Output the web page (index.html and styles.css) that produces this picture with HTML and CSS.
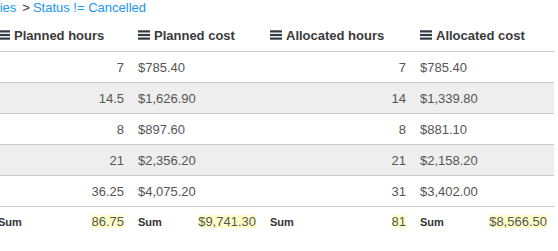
FILE: index.html
```html
<!DOCTYPE html>
<html>
<head>
<meta charset="utf-8">
<link rel="stylesheet" href="styles.css">
</head>
<body>
<div class="page">
  <div class="crumbs"><a class="crumb">Activities</a><span class="sep">&gt;</span><a class="crumb">Status != Cancelled</a></div>
  <table class="grid">
    <colgroup>
      <col class="c1"><col class="c2"><col class="c3"><col class="c4">
    </colgroup>
    <thead>
      <tr>
        <th><svg class="bars" viewBox="0 0 12 10" width="12" height="10"><rect x="0" y="0.3" width="12" height="2.2"/><rect x="0" y="3.9" width="12" height="2.2"/><rect x="0" y="7.5" width="12" height="2.2"/></svg>Planned hours</th>
        <th><svg class="bars" viewBox="0 0 12 10" width="12" height="10"><rect x="0" y="0.3" width="12" height="2.2"/><rect x="0" y="3.9" width="12" height="2.2"/><rect x="0" y="7.5" width="12" height="2.2"/></svg>Planned cost</th>
        <th><svg class="bars" viewBox="0 0 12 10" width="12" height="10"><rect x="0" y="0.3" width="12" height="2.2"/><rect x="0" y="3.9" width="12" height="2.2"/><rect x="0" y="7.5" width="12" height="2.2"/></svg>Allocated hours</th>
        <th><svg class="bars" viewBox="0 0 12 10" width="12" height="10"><rect x="0" y="0.3" width="12" height="2.2"/><rect x="0" y="3.9" width="12" height="2.2"/><rect x="0" y="7.5" width="12" height="2.2"/></svg>Allocated cost</th>
      </tr>
    </thead>
    <tbody>
      <tr><td class="num">7</td><td>$785.40</td><td class="num">7</td><td>$785.40</td></tr>
      <tr class="alt"><td class="num">14.5</td><td>$1,626.90</td><td class="num">14</td><td>$1,339.80</td></tr>
      <tr><td class="num">8</td><td>$897.60</td><td class="num">8</td><td>$881.10</td></tr>
      <tr class="alt"><td class="num">21</td><td>$2,356.20</td><td class="num">21</td><td>$2,158.20</td></tr>
      <tr><td class="num">36.25</td><td>$4,075.20</td><td class="num">31</td><td>$3,402.00</td></tr>
    </tbody>
    <tfoot>
      <tr>
        <td><div class="agg"><span class="lbl">Sum</span><span class="val">86.75</span></div></td>
        <td><div class="agg"><span class="lbl">Sum</span><span class="val">$9,741.30</span></div></td>
        <td><div class="agg"><span class="lbl">Sum</span><span class="val">81</span></div></td>
        <td><div class="agg"><span class="lbl">Sum</span><span class="val">$8,566.50</span></div></td>
      </tr>
    </tfoot>
  </table>
</div>
</body>
</html>
```
FILE: styles.css
```css
html, body {
  margin: 0;
  padding: 0;
  background: #fff;
}
body {
  font-family: "Liberation Sans", Arial, sans-serif;
  font-size: 13px;
  overflow: hidden;
}
.page {
  margin-left: -9px;
  width: 600px;
}
.crumbs {
  margin-left: -26px;
  line-height: 15px;
  height: 15px;
  margin-bottom: 5px;
  white-space: nowrap;
}
.crumb {
  color: #2196f3;
}
.sep {
  color: #333;
  margin: 0 3px 0 6px;
}
.grid {
  border-collapse: collapse;
  table-layout: fixed;
  width: 563px;
}
.c1 { width: 140px; }
.c2 { width: 132px; }
.c3 { width: 150px; }
.c4 { width: 141px; }
.grid th {
  text-align: left;
  font-weight: bold;
  color: #3a3a3a;
  line-height: 15px;
  padding: 8px 7px 8px 7px;
  border-bottom: 1px solid #c9c9c9;
  white-space: nowrap;
}
.bars {
  fill: #333b42;
  vertical-align: baseline;
  margin-right: 4px;
}
.grid td {
  color: #555;
  line-height: 15px;
  padding: 8px 7px 7px 7px;
  white-space: nowrap;
}
.grid tbody td {
  border-bottom: 1px solid #c9c9c9;
}
.grid tbody tr.alt td {
  background: #eeeeee;
}
.grid td.num {
  text-align: right;
}
.agg {
  display: flex;
  justify-content: space-between;
  align-items: baseline;
}
.lbl {
  font-size: 11px;
  font-weight: bold;
  color: #333;
}
.val {
  background: #ffffc8;
  color: #555;
  font-size: 13px;
  display: inline-block;
  line-height: 13px;
}
```
